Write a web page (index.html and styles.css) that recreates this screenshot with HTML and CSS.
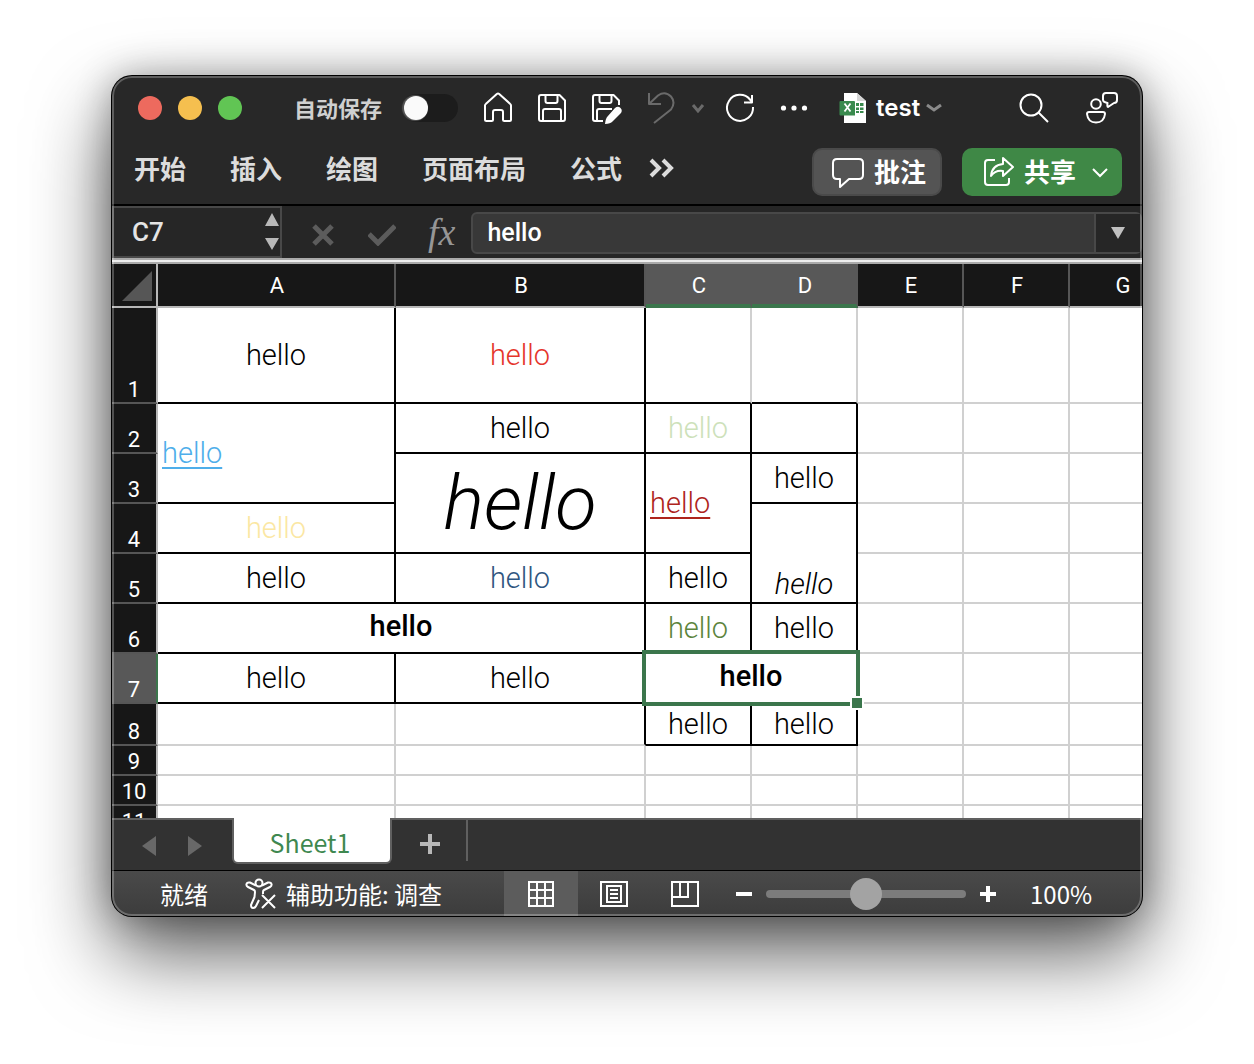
FILE: index.html
```html
<!DOCTYPE html>
<html lang="zh-CN">
<head>
<meta charset="utf-8">
<title>test</title>
<link rel="stylesheet" href="styles.css">
</head>
<body>
<main class="window">
  <header class="top">
    <div class="titlebar">
      <div class="lights">
        <button class="light light-close" aria-label="关闭"></button>
        <button class="light light-min" aria-label="最小化"></button>
        <button class="light light-zoom" aria-label="缩放"></button>
      </div>
      <label class="autosave"><span class="autosave-text">自动保存</span><input type="checkbox" class="switch"></label>
      <div class="quick">
        <button class="tool" aria-label="主页"><svg class="icon" viewBox="0 0 32 32"><path d="M3 13.5q0-1 1-1.8L14.8 2q1.2-1 2.4 0L28 11.700q1 .8 1 1.800V27.500q0 1.500-1.500 1.500H22.500q-1.500 0-1.500-1.500V20q0-2-2-2h-6q-2 0-2 2v7.500q0 1.500-1.500 1.500H4.500Q3 29 3 27.500z"/></svg></button>
        <button class="tool" aria-label="保存"><svg class="icon" viewBox="0 0 32 32"><path d="M5 3h18.500L29 8.500V27q0 2-2 2H5q-2 0-2-2V5q0-2 2-2zM9.500 3v6q0 2 2 2h8q2 0 2-2V3M7 29V19q0-2 2-2h14q2 0 2 2v10"/></svg></button>
        <button class="tool" aria-label="另存为"><svg class="icon" viewBox="0 0 32 32"><path d="M13 29H5q-2 0-2-2V5q0-2 2-2h18.500L29 8.500V13M9.500 3v6q0 2 2 2h8q2 0 2-2V3M7 29V19q0-2 2-2h13"/><path class="solid" d="M25 16q3-2.500 5.500 0t0 5.500l-8 8q-2 2-7.500 2.500q.5-5.500 2.500-7.500z"/></svg></button>
        <button class="tool dim" aria-label="撤消"><svg class="icon" viewBox="0 0 32 32"><path d="M5 1v11h12M5 12L14 3.500q7-5 13 1q5 6 0 13L10 31"/></svg></button>
        <button class="tool tool-narrow dim" aria-label="撤消选项"><svg class="chev" viewBox="0 0 16 16"><path class="thick" d="M3 5l5 6 5-6"/></svg></button>
        <button class="tool" aria-label="恢复"><svg class="icon" viewBox="0 0 32 32"><path d="M29 15a13 13 0 1 1-3-7.500L28 10M28 3v7.500h-8"/></svg></button>
        <button class="tool" aria-label="更多"><svg class="icon" viewBox="0 0 32 32"><g class="solid"><circle cx="5.500" cy="16" r="2.600"/><circle cx="16" cy="16" r="2.600"/><circle cx="26.500" cy="16" r="2.600"/></g></svg></button>
      </div>
      <button class="doc"><svg class="doc-icon" viewBox="0 0 28 30"><path fill="#fff" d="M5 0h13l9 8v22H5z"/><path fill="#d5d5d5" d="M18 0l9 8h-9z"/><path fill="#3a8a4e" d="M1.500 8H15a1 1 0 0 1 1 1v13.500H1.500a1 1 0 0 1-1-1V9a1 1 0 0 1 1-1zM17 10h3v3h-3zM21 10h3.500v3H21zM17 14.500h3v2.500h-3zM21 14.500h3.500v2.500H21zM17 18h3v2h-3zM21 18h3.500v2H21z"/><path stroke="#fff" stroke-width="1.800" fill="none" d="M5.500 10.500l6 8M11.500 10.500l-6 8"/></svg><span>test</span><svg class="chev muted" viewBox="0 0 16 16"><path class="thick" d="M1 5l7 5 7-5"/></svg></button>
      <button class="tool search" aria-label="搜索"><svg class="icon" viewBox="0 0 32 32"><circle cx="13" cy="13" r="10.500"/><path d="M20.500 20.500L30 30"/></svg></button>
      <button class="tool person" aria-label="联系人"><svg class="icon" viewBox="0 0 32 32"><circle cx="10" cy="12" r="4.800"/><path d="M3 20h14q2 0 2 2q-1 8.500-9 8.500T1 22q0-2 2-2zM20 1h8q3 0 3 3v4q0 3-3 3l-6 4q-1 0-.5-4Q17 10 17 8V4q0-3 3-3z"/></svg></button>
    </div>
    <nav class="ribbon">
      <button class="tab">开始</button>
      <button class="tab">插入</button>
      <button class="tab">绘图</button>
      <button class="tab">页面布局</button>
      <button class="tab">公式</button>
      <button class="tab tab-more" aria-label="更多选项卡"><svg class="more" viewBox="0 0 24 20"><path class="heavy" d="M2 2l8 8-8 8M14 2l8 8-8 8"/></svg></button>
      <button class="action comment"><svg class="icon" viewBox="0 0 32 32"><path d="M5 3h22q4 0 4 4v12q0 4-4 4H17l-9 8v-8H5q-4 0-4-4V7q0-4 4-4z"/></svg><span class="action-text">批注</span></button>
      <button class="action share"><svg class="icon" viewBox="0 0 32 32"><path d="M13 4H6Q3 4 3 7v19q0 3 3 3h18q3 0 3-3v-4M21 2l10 9-10 9v-5q-8-1-12 5q1-11 12-12z"/></svg><span class="action-text">共享</span><svg class="chev chev-share" viewBox="0 0 16 16"><path d="M1 5l7 7 7-7"/></svg></button>
    </nav>
  </header>

  <div class="formula">
    <div class="namebox">
      <input class="name" aria-label="名称框" value="C7">
      <svg class="spin" viewBox="0 0 16 38"><path d="M8 0l7 13H1zM8 37l7-12H1z"/></svg>
    </div>
    <button class="fbtn" aria-label="取消"><svg viewBox="0 0 22 22" width="22" height="22"><path d="M2 2l18 18M20 2L2 20"/></svg></button>
    <button class="fbtn" aria-label="输入"><svg viewBox="0 0 28 22" width="28" height="22"><path d="M1 10l9 9L27 2"/></svg></button>
    <button class="fbtn fx">fx</button>
    <div class="entry">
      <input class="entry-text" aria-label="编辑栏" value="hello">
      <button class="expand" aria-label="展开"><svg viewBox="0 0 14 12" width="14" height="12"><path d="M0 0h14L7 12z"/></svg></button>
    </div>
  </div>

  <div class="sheet">
    <table class="grid">
      <colgroup><col class="c-head"><col class="c-a"><col class="c-b"><col class="c"><col class="c"><col class="c"><col class="c"><col class="c"></colgroup>
      <thead>
        <tr><th class="corner"><svg viewBox="0 0 30 30" width="30" height="30"><path d="M30 0v30H0z"/></svg></th><th>A</th><th>B</th><th class="on">C</th><th class="on">D</th><th>E</th><th>F</th><th>G</th></tr>
      </thead>
      <tbody>
        <tr class="r1"><th>1</th><td class="k">hello</td><td class="k red">hello</td><td class="kb"></td><td class="kb"></td><td></td><td></td><td></td></tr>
        <tr class="r"><th>2</th><td class="k left" rowspan="2"><a class="blue" href="#">hello</a></td><td class="k">hello</td><td class="k pale">hello</td><td class="k"></td><td></td><td></td><td></td></tr>
        <tr class="r"><th>3</th><td class="k big" rowspan="2">hello</td><td class="k left" rowspan="2"><a class="brick" href="#">hello</a></td><td class="k">hello</td><td></td><td></td><td></td></tr>
        <tr class="r"><th>4</th><td class="k yellow">hello</td><td class="k low" rowspan="2">hello</td><td></td><td></td><td></td></tr>
        <tr class="r"><th>5</th><td class="k">hello</td><td class="k navy">hello</td><td class="k">hello</td><td></td><td></td><td></td></tr>
        <tr class="r"><th>6</th><td class="k bold" colspan="2">hello</td><td class="k green">hello</td><td class="k">hello</td><td></td><td></td><td></td></tr>
        <tr class="r"><th class="on">7</th><td class="k">hello</td><td class="k">hello</td><td class="k bold active" colspan="2">hello</td><td></td><td></td><td></td></tr>
        <tr class="r8"><th>8</th><td></td><td class="kr"></td><td class="k">hello</td><td class="k">hello</td><td></td><td></td><td></td></tr>
        <tr class="rs"><th>9</th><td></td><td></td><td></td><td></td><td></td><td></td><td></td></tr>
        <tr class="rs"><th>10</th><td></td><td></td><td></td><td></td><td></td><td></td><td></td></tr>
        <tr class="rs"><th>11</th><td></td><td></td><td></td><td></td><td></td><td></td><td></td></tr>
      </tbody>
    </table>
  </div>

  <div class="tabs">
    <div class="arrows">
      <button aria-label="上一个工作表"><svg viewBox="0 0 14 20" width="14" height="20"><path d="M14 0v20L0 10z"/></svg></button>
      <button aria-label="下一个工作表"><svg viewBox="0 0 14 20" width="14" height="20"><path d="M0 0v20l14-10z"/></svg></button>
    </div>
    <button class="sheet-tab">Sheet1</button>
    <button class="add" aria-label="新建工作表"><svg viewBox="0 0 20 20" width="20" height="20"><path d="M10 0v20M0 10h20"/></svg></button>
  </div>

  <footer class="status">
    <span class="ready">就绪</span>
    <button class="access"><svg class="icon" viewBox="0 0 32 32"><circle cx="15" cy="5" r="3.500"/><path d="M12 7.500L6 4.500Q3 4 2.500 6t1.500 3l6 3q1 .5 1 2l-.5 5L7 27q0 3 2 3t3-2l3-6M18 7.500l6-3q3-.5 3.500 1.500T26 9l-6 3q-1 .5-1 2v2M18 17l13 13M31 17L18 30"/></svg>辅助功能: 调查</button>
    <div class="views">
      <button class="view view-on" aria-label="普通"><svg viewBox="0 0 28 28" width="28" height="28"><path d="M2 2h24v24H2zM10 2v24M18 2v24M2 10h24M2 18h24"/></svg></button>
      <button class="view" aria-label="页面布局"><svg viewBox="0 0 28 28" width="28" height="28"><path d="M1 2h26v24H1zM7 6h14v16H7zM10 10h8M10 14h8M10 18h8"/></svg></button>
      <button class="view" aria-label="分页预览"><svg viewBox="0 0 28 28" width="28" height="28"><path d="M1 2h26v24H1zM9 2v15M17 2v15M1 17h17"/></svg></button>
    </div>
    <div class="zoom">
      <button class="step" aria-label="缩小"><svg viewBox="0 0 16 16" width="16" height="16"><path d="M0 8h16"/></svg></button>
      <input class="range" type="range" min="0" max="100" value="50" aria-label="缩放">
      <button class="step" aria-label="放大"><svg viewBox="0 0 16 16" width="16" height="16"><path d="M0 8h16M8 0v16"/></svg></button>
      <span class="percent">100%</span>
    </div>
  </footer>
</main>
</body>
</html>
```
FILE: styles.css
```css
*, *::before, *::after { box-sizing: border-box; }

body {
  margin: 0;
  padding: 76px 112px 148px;
  background: #fff;
  color: #fff;
  font-family: "Noto Sans CJK SC", sans-serif;
}

button, input {
  margin: 0;
  padding: 0;
  border: 0;
  background: none;
  color: inherit;
  font: inherit;
}

svg {
  display: block;
  flex: none;
  fill: none;
  stroke: currentColor;
  stroke-width: 2;
}

.solid { fill: currentColor; stroke: none; }
.thick { stroke-width: 3; }
.heavy { stroke-width: 4; }
.icon { width: 32px; height: 32px; stroke-linejoin: round; }
.chev { width: 16px; height: 16px; }

.window {
  position: relative;
  border-radius: 20px;
  overflow: hidden;
  background: #282828;
  box-shadow: 0 0 0 1px #000, 0 0 36px rgba(0, 0, 0, .3), 0 36px 80px rgba(0, 0, 0, .66);
}

/* glassy inner rim of the window */
.window::after {
  content: "";
  position: absolute;
  inset: 0;
  border: 2px solid rgba(255, 255, 255, .25);
  border-radius: 20px;
  pointer-events: none;
}

.top { border-bottom: 2px solid #000; }

.titlebar {
  display: flex;
  align-items: center;
  height: 64px;
  padding: 0 13px 0 26px;
}

.lights { display: flex; gap: 16px; }
.light { width: 24px; height: 24px; border-radius: 50%; }
.light-close { background: #ed6a5e; }
.light-min { background: #f5bf4f; }
.light-zoom { background: #61c554; }

.autosave {
  display: flex;
  align-items: center;
  gap: 20px;
  margin-left: 52px;
  color: #d0d0d0;
  font-size: 22px;
  font-weight: 700;
  line-height: 32px;
}
.autosave-text, .action-text { padding-bottom: 3px; }

.switch {
  appearance: none;
  display: flex;
  width: 56px;
  height: 28px;
  padding: 2px;
  border-radius: 14px;
  background: #1c1c1c;
}
.switch::before {
  content: "";
  width: 24px;
  height: 24px;
  border-radius: 50%;
  background: #fafafa;
  box-shadow: -1px 0 1px 1px #555;
}

.quick { display: flex; margin-left: 13px; }
.tool { display: flex; align-items: center; justify-content: center; width: 54px; height: 40px; }
.tool-narrow { width: 26px; padding-right: 4px; }
.dim { color: #6a6a6a; }
.muted { color: #8a8a8a; }

.doc {
  display: flex;
  align-items: center;
  margin-left: 18px;
  font-family: Inter, sans-serif;
  font-size: 24px;
  font-weight: 600;
  line-height: 32px;
}
.doc-icon { width: 28px; height: 30px; margin-right: 9px; stroke: none; }
.doc .chev { margin-left: 6px; }
.search { margin-left: auto; }
.person { margin-left: 14px; }

.ribbon {
  display: flex;
  align-items: center;
  height: 64px;
  padding: 0 20px 0 22px;
}
.tab {
  margin-right: 44px;
  padding-bottom: 8px;
  color: #dcdcdc;
  font-size: 26px;
  font-weight: 700;
  line-height: 36px;
}
.tab-more { margin: 0 0 0 -18px; }
.more { width: 26px; height: 20px; }

.action {
  display: flex;
  align-items: center;
  height: 48px;
  border-radius: 10px;
  font-size: 26px;
  font-weight: 700;
}
.comment {
  width: 130px;
  gap: 10px;
  margin-left: auto;
  border: 2px solid #4a4a4a;
  padding-left: 18px;
  background: #545454;
}
.share {
  width: 160px;
  gap: 10px;
  margin-left: 20px;
  padding-left: 20px;
  background: #3f8846;
}
.chev-share { margin-left: 6px; }

.formula {
  display: flex;
  align-items: center;
  height: 58px;
  padding-bottom: 6px;
  background: linear-gradient(#262626 52px, #aaa 52px, #aaa 54px, #eee 54px, #eee 56px, #aaa 56px);
}
.namebox {
  display: flex;
  align-items: center;
  width: 170px;
  height: 52px;
  padding: 0 0 0 18px;
  border: 2px solid #484848;
}
.name {
  width: 100px;
  color: #e4e4e4;
  font-family: Roboto, sans-serif;
  font-size: 26px;
  font-weight: 500;
  line-height: 32px;
}
.spin { width: 16px; height: 38px; margin-left: auto; fill: #b8b8b8; stroke: none; }
.fbtn { margin-left: 30px; color: #5c5c5c; }
.fbtn svg { stroke-width: 5; margin-top: 6px; }
.fbtn + .fbtn { margin-left: 34px; }
.formula .fx {
  margin-left: 32px;
  color: #969696;
  font-family: "Liberation Serif", serif;
  font-size: 38px;
  font-style: italic;
  line-height: 40px;
}
.entry {
  display: flex;
  flex: 1;
  height: 42px;
  margin: 2px 0 0 16px;
  border: 2px solid #484848;
  border-radius: 6px;
  background: #383838;
}
.entry-text {
  flex: 1;
  min-width: 0;
  padding-left: 14px;
  font-family: Roboto, sans-serif;
  font-size: 25px;
  font-weight: 500;
  line-height: 36px;
}
.expand {
  display: flex;
  align-items: center;
  justify-content: center;
  width: 46px;
  border-left: 2px solid #484848;
  background: #262626;
}
.expand svg { fill: #c0c0c0; stroke: none; }

.sheet {
  height: 554px;
  overflow: hidden;
  background: #fff;
}
.grid {
  width: 1064px;
  table-layout: fixed;
  border-collapse: separate;
  border-spacing: 0;
  color: #000;
  font-family: Roboto, sans-serif;
  font-size: 29px;
  font-weight: 300;
  line-height: 36px;
  text-align: center;
}
.c-head { width: 46px; }
.c-a { width: 238px; }
.c-b { width: 250px; }
.c { width: 106px; }

.grid td {
  padding: 0;
  border: 0 solid #d0d0d0;
  border-width: 0 2px 2px 0;
  vertical-align: middle;
}
.grid th {
  padding: 0;
  background: #171717;
  color: #fff;
  font-family: Roboto, sans-serif;
  font-size: 22px;
  font-weight: 400;
  line-height: 26px;
}
.grid thead th {
  height: 44px;
  padding: 2px 0 0 2px;
  border-right: 2px solid #565656;
  border-bottom: 2px solid #b8b8b8;
}
.grid thead .on {
  padding-top: 4px;
  border-right-color: #585858;
  border-bottom: 4px solid #3b764c;
  background: #585858;
}
.grid thead .corner { border-right-color: #b8b8b8; }
.corner svg { margin-left: 8px; fill: #565656; stroke: none; }
.grid tbody th {
  border-right: 2px solid #b8b8b8;
  border-bottom: 2px solid #565656;
  line-height: 24px;
  vertical-align: bottom;
}
.grid tbody .on { border-right-color: #3b764c; background: #585858; }

.r1 { height: 96px; }
.r { height: 50px; }
.r8 { height: 42px; }
.rs { height: 30px; }

.grid .k { border-color: #000; }
.grid .kb { border-bottom-color: #000; }
.grid .kr { border-right-color: #000; }
.grid .left { padding-left: 4px; text-align: left; }
.grid .low { font-style: italic; vertical-align: bottom; }
.grid .big { font-size: 76px; font-style: italic; line-height: 92px; }
.grid .bold { padding-bottom: 4px; font-weight: 500; }
.grid a { text-decoration-thickness: 2px; text-underline-offset: 4px; }
.red { color: #e5352b; }
.blue { color: #4eaeea; }
.pale { color: #cde1ba; }
.brick { color: #ae241c; }
.yellow { color: #fbe7a3; }
.navy { color: #2f5680; }
.green { color: #5c843c; }

/* selection frame and its fill handle, drawn over the cell borders */
.active { position: relative; }
.active::before {
  content: "";
  position: absolute;
  inset: -4px;
  border: 4px solid #3b764c;
}
.active::after {
  content: "";
  position: absolute;
  right: -8px;
  bottom: -8px;
  width: 14px;
  height: 14px;
  border: 2px solid #fff;
  background: #3b764c;
}

.tabs {
  display: flex;
  align-items: flex-start;
  height: 53px;
  border-bottom: 1px solid #000;
  background: linear-gradient(#606060 2px, #323232 2px);
}
.arrows { display: flex; gap: 32px; padding: 18px 0 0 30px; width: 120px; }
.arrows svg { fill: #686868; stroke: none; }
.sheet-tab {
  width: 160px;
  height: 46px;
  padding: 4px 4px 0 0;
  border: 2px solid #606060;
  border-top: 0;
  border-radius: 0 0 6px 6px;
  background: #fff;
  color: #3f8850;
  font-size: 25px;
  line-height: 36px;
}
.add {
  display: flex;
  align-items: center;
  width: 76px;
  height: 41px;
  margin-top: 2px;
  padding: 6px 0 0 28px;
  border-right: 2px solid #606060;
  color: #b8b8b8;
}
.add svg { stroke-width: 4; }

.status {
  display: flex;
  align-items: center;
  height: 45px;
  padding-left: 48px;
  background: linear-gradient(#4a4a4a, #3c3c3c);
  font-size: 24px;
  line-height: 36px;
}
.access { display: flex; align-items: center; gap: 10px; margin-left: 36px; }
.views { display: flex; align-self: stretch; margin-left: auto; }
.view { display: flex; align-items: center; justify-content: center; width: 71px; }
.view-on { width: 74px; background: #5c5c5c; }
.zoom { display: flex; align-items: center; margin-left: 16px; }
.step svg { stroke-width: 4; }
.range {
  appearance: none;
  width: 200px;
  height: 8px;
  margin: 0 14px;
  border-radius: 4px;
  background: #7c7c7c;
}
.range::-webkit-slider-thumb {
  appearance: none;
  width: 32px;
  height: 32px;
  border-radius: 50%;
  background: #a3a3a3;
}
.percent { width: 112px; margin-left: 34px; }
```
